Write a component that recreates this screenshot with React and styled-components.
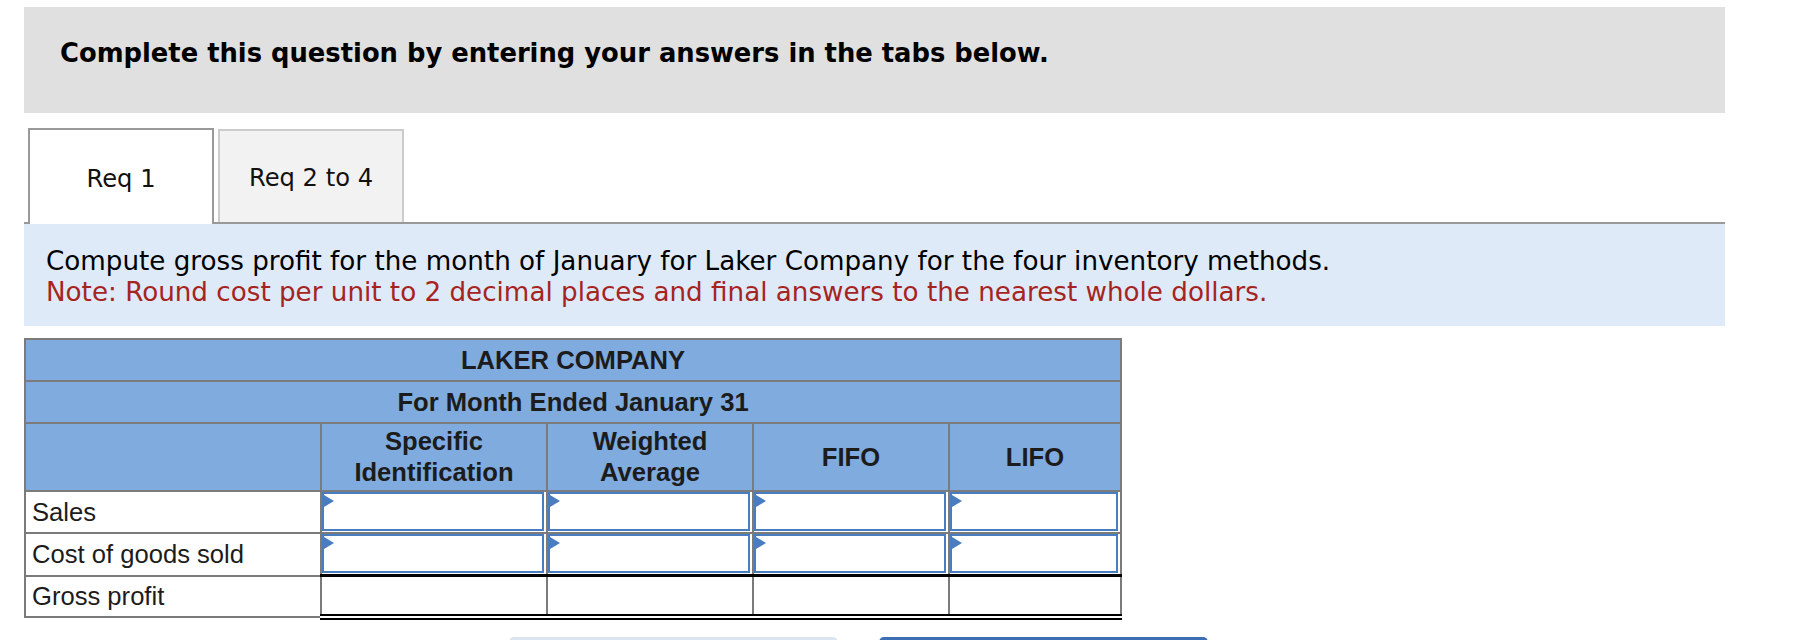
import React from "react";
import styled, { createGlobalStyle } from "styled-components";

const GlobalStyle = createGlobalStyle`
  body {
    margin: 0;
    background: #fff;
  }
`;

const Page = styled.div`
  width: 1701px;
  padding: 7px 0 40px 24px;
`;

const QuestionBar = styled.div`
  box-sizing: border-box;
  height: 106px;
  padding: 31px 0 0 36px;
  background: #e0e0e0;
  font-family: "DejaVu Sans", Verdana, sans-serif;
  font-weight: bold;
  font-size: 25.8px;
  line-height: 30px;
  color: #000;
`;

const TabBar = styled.div`
  display: flex;
  align-items: flex-end;
  gap: 4px;
  height: 94px;
  margin-top: 15px;
  padding-left: 4px;
  border-bottom: 2px solid #999;
`;

const Tab = styled.div`
  box-sizing: border-box;
  display: flex;
  align-items: center;
  justify-content: center;
  width: 186px;
  height: ${(p) => (p.$active ? "96px" : "93px")};
  margin-bottom: ${(p) => (p.$active ? "-2px" : "0")};
  padding-top: ${(p) => (p.$active ? "4px" : "2px")};
  border: 2px solid ${(p) => (p.$active ? "#999" : "#ccc")};
  border-bottom: none;
  background: ${(p) => (p.$active ? "#fff" : "#f2f2f2")};
  font-family: "DejaVu Sans", Verdana, sans-serif;
  font-size: 24.2px;
  color: #111;
`;

const Prompt = styled.div`
  padding: 22px 22px 18px;
  background: #deeaf8;
  font-family: "DejaVu Sans", Verdana, sans-serif;
  font-size: 26.2px;
  line-height: 31px;
  color: #000;
`;

const Note = styled.div`
  color: #a6241f;
`;

const Table = styled.table`
  margin-top: 12px;
  border-collapse: collapse;
  table-layout: fixed;
  width: 1098px;
  font-family: "Liberation Sans", Arial, sans-serif;
  font-size: 25.6px;
  color: #1c1c1c;
`;

const HeadCell = styled.th`
  height: ${(p) => p.$h || 40}px;
  padding: 0;
  border: 2px solid #7b7b7b;
  background: #80abdf;
  font-weight: bold;
  line-height: 31px;
  text-align: center;
`;

const Label = styled.td`
  height: ${(p) => p.$h || 40}px;
  padding: 0 0 0 6px;
  border: 2px solid #7b7b7b;
  background: #fff;
`;

const Cell = styled.td`
  padding: 0 0 1px 0;
  border: 2px solid #7b7b7b;
  background: #fff;
  vertical-align: top;

  ${(p) =>
    p.$total &&
    `
    border-top: 3px solid #000;
    border-bottom: 6px double #000;
  `}
`;

const InputBox = styled.div`
  position: relative;
  box-sizing: border-box;
  width: calc(100% - 2px);
  height: 39px;
  border: 2px solid #4a7cc0;
  background: #fff;

  &::before {
    content: "";
    position: absolute;
    top: 1px;
    left: 0;
    border-top: 6px solid transparent;
    border-bottom: 6px solid transparent;
    border-left: 10px solid #4a7cc0;
  }
`;

const Input = styled.input`
  box-sizing: border-box;
  width: 100%;
  height: 100%;
  border: none;
  outline: none;
  padding: 0 8px;
  background: transparent;
  font: inherit;
  text-align: right;
`;

const Buttons = styled.div`
  display: flex;
  gap: 41px;
  margin-top: 17px;
  padding-left: 485px;
`;

const NavButton = styled.button`
  width: 329px;
  height: 52px;
  border: none;
  border-radius: 5px;
  background: ${(p) => (p.$primary ? "#3c6eb4" : "#dbe5f0")};
`;

const methods = [
  ["Specific", "Identification"],
  ["Weighted", "Average"],
  ["FIFO"],
  ["LIFO"],
];

const rows = [
  { label: "Sales", input: true },
  { label: "Cost of goods sold", input: true },
  { label: "Gross profit", total: true },
];

const App = () => {
  return (
    <Page>
      <GlobalStyle />
      <QuestionBar>Complete this question by entering your answers in the tabs below.</QuestionBar>

      <TabBar>
        <Tab $active>Req 1</Tab>
        <Tab>Req 2 to 4</Tab>
      </TabBar>

      <Prompt>
        <div>Compute gross profit for the month of January for Laker Company for the four inventory methods.</div>
        <Note>Note: Round cost per unit to 2 decimal places and final answers to the nearest whole dollars.</Note>
      </Prompt>

      <Table>
        <colgroup>
          <col style={{ width: 296 }} />
          <col style={{ width: 226 }} />
          <col style={{ width: 206 }} />
          <col style={{ width: 196 }} />
          <col style={{ width: 172 }} />
        </colgroup>
        <thead>
          <tr>
            <HeadCell colSpan={5}>LAKER COMPANY</HeadCell>
          </tr>
          <tr>
            <HeadCell colSpan={5}>For Month Ended January 31</HeadCell>
          </tr>
          <tr>
            <HeadCell $h={66} />
            {methods.map((m) => (
              <HeadCell key={m[0]} $h={66}>
                {m.map((line) => (
                  <div key={line}>{line}</div>
                ))}
              </HeadCell>
            ))}
          </tr>
        </thead>
        <tbody>
          {rows.map((row) => (
            <tr key={row.label}>
              <Label $h={row.total ? 39 : 40}>{row.label}</Label>
              {methods.map((m) => (
                <Cell key={m[0]} $total={row.total}>
                  {row.input && (
                    <InputBox>
                      <Input type="text" aria-label={`${row.label} ${m.join(" ")}`} />
                    </InputBox>
                  )}
                </Cell>
              ))}
            </tr>
          ))}
        </tbody>
      </Table>

      <Buttons>
        <NavButton disabled aria-label="Previous: Req 1" />
        <NavButton $primary aria-label="Next: Req 2 to 4" />
      </Buttons>
    </Page>
  );
};

export default App;
